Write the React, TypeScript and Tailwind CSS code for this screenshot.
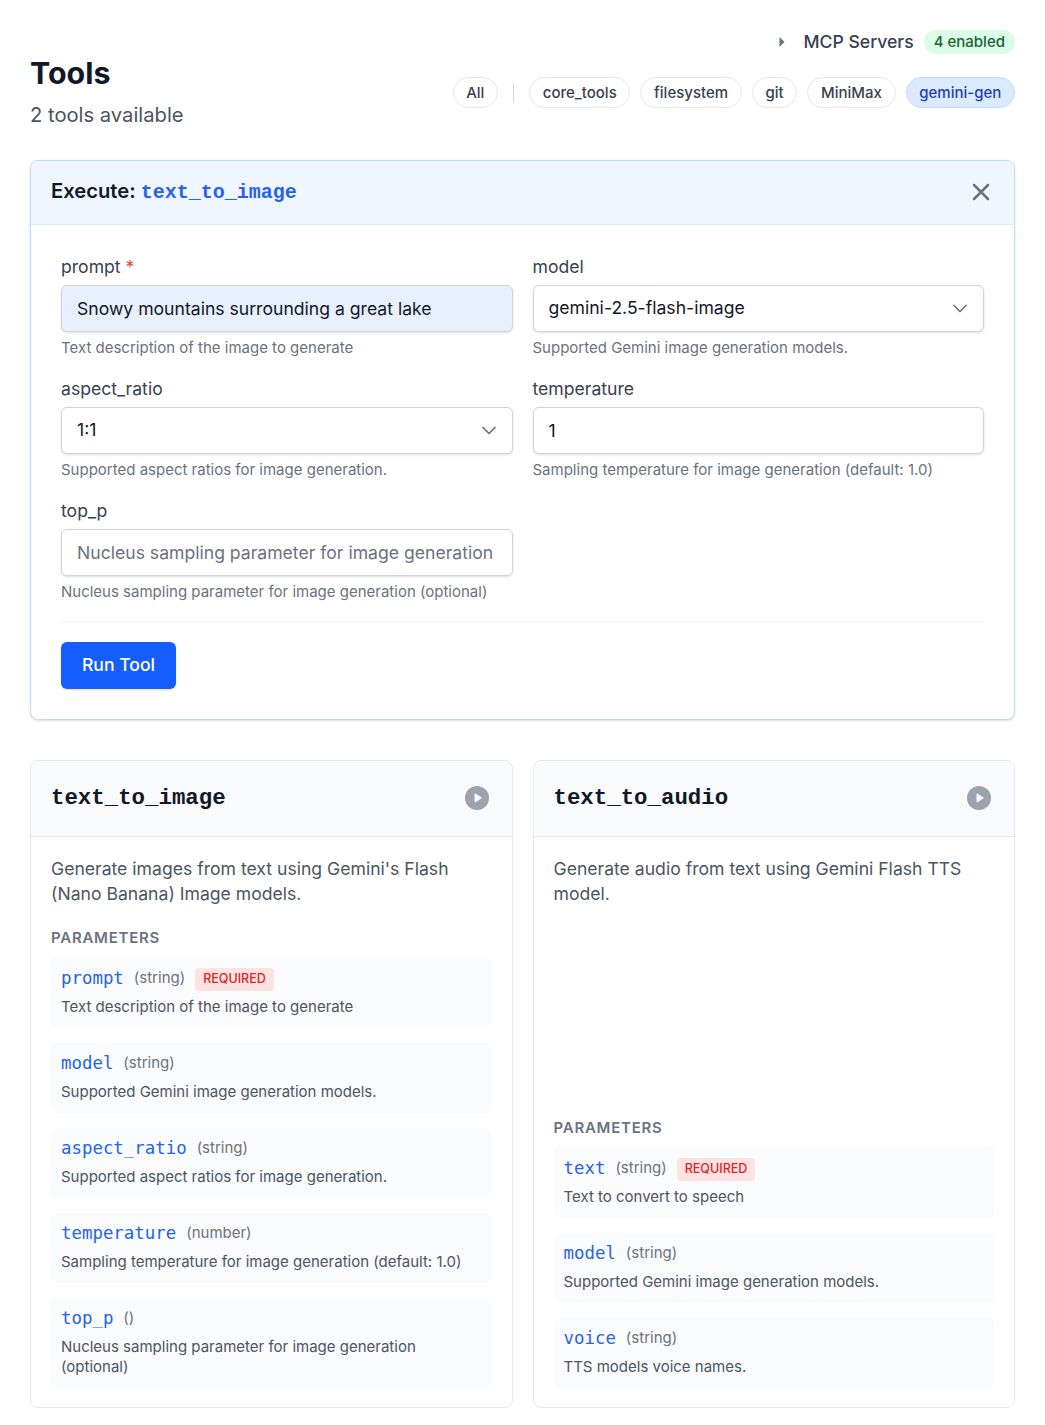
import React from 'react';

const FONT = "font-['Inter',sans-serif]";
const MONO = "font-['Liberation_Mono',monospace]";

interface Param {
  name: string;
  type: string;
  desc: string;
  required?: boolean;
}

const imageParams: Param[] = [
  { name: 'prompt', type: '(string)', desc: 'Text description of the image to generate', required: true },
  { name: 'model', type: '(string)', desc: 'Supported Gemini image generation models.' },
  { name: 'aspect_ratio', type: '(string)', desc: 'Supported aspect ratios for image generation.' },
  { name: 'temperature', type: '(number)', desc: 'Sampling temperature for image generation (default: 1.0)' },
  { name: 'top_p', type: '()', desc: 'Nucleus sampling parameter for image generation (optional)' },
];

const audioParams: Param[] = [
  { name: 'text', type: '(string)', desc: 'Text to convert to speech', required: true },
  { name: 'model', type: '(string)', desc: 'Supported Gemini image generation models.' },
  { name: 'voice', type: '(string)', desc: 'TTS models voice names.' },
];

const filters = ['core_tools', 'filesystem', 'git', 'MiniMax'];

const inputClass =
  'block w-full h-[47px] rounded-md border border-[#d1d5db] bg-white px-[15px] text-[17.6px] text-[#111827] shadow-sm outline-none appearance-none placeholder:text-[#6b7280]';

const chipClass =
  'h-[31px] rounded-full border border-[#e5e7eb] bg-white px-[12.7px] pt-[1px] text-[15px] font-medium text-[#374151]';

const Field: React.FC<{ label: string; help: string; required?: boolean; children: React.ReactNode }> = ({
  label,
  help,
  required,
  children,
}) => (
  <div className="flex flex-col">
    <label className="text-[17.6px] leading-[27px] mb-[5px] text-[#374151]">
      {label}
      {required && <span className="text-[#ef4444]"> *</span>}
    </label>
    {children}
    <p className="mt-[5px] text-[15px] leading-[21px] text-[#6b7280]">{help}</p>
  </div>
);

const SelectField: React.FC<{ value: string }> = ({ value }) => (
  <div className="relative">
    <select className={inputClass} defaultValue={value}>
      <option>{value}</option>
    </select>
    <svg
      className="absolute right-[12px] top-[11px] w-[24px] h-[24px] text-[#6b7280]"
      viewBox="0 0 24 24"
      fill="none"
      stroke="currentColor"
      strokeWidth="1.7"
      strokeLinecap="round"
      strokeLinejoin="round"
    >
      <path d="M6 9.5l6 6 6-6" />
    </svg>
  </div>
);

const ParamRow: React.FC<{ param: Param }> = ({ param }) => (
  <div className={`rounded-md bg-[#fafbfd] px-[10px] pb-[11px] ${param.required ? 'pt-[10px]' : 'pt-[9px]'}`}>
    <div className={`flex items-center gap-[10px] ${param.required ? 'h-[25px]' : 'h-[23px]'}`}>
      <code className="font-['DejaVu_Sans_Mono',monospace] text-[17.4px] text-[#2563eb]">{param.name}</code>
      <span className="text-[15px] text-[#6b7280]">{param.type}</span>
      {param.required && (
        <span className="rounded-[4px] bg-[#fee2e2] px-[8px] h-[23px] translate-y-px flex items-center text-[12.5px] font-medium text-[#dc2626]">
          REQUIRED
        </span>
      )}
    </div>
    <p className={`text-[15px] leading-[20px] text-[#4b5563] ${param.required ? 'mt-[6px]' : 'mt-[7px]'}`}>
      {param.desc}
    </p>
  </div>
);

const ToolCard: React.FC<{ name: string; desc: string; params: Param[] }> = ({ name, desc, params }) => (
  <div className="flex flex-col rounded-lg border border-[#e5e7eb] bg-white overflow-hidden">
    <div className="flex items-center justify-between h-[76px] px-[20px] bg-[#f9fafc] border-b border-[#e5e7eb]">
      <h3 className={`${MONO} text-[22.4px] font-bold text-[#111827]`}>{name}</h3>
      <svg className="w-6 h-6 text-[#9ca3af] mr-[3px] mb-[2px]" viewBox="0 0 24 24" fill="currentColor">
        <circle cx="12" cy="12" r="12" />
        <path d="M9.5 8.3c0-.6.6-1 1.1-.7l5.6 3.7c.5.3.5 1 0 1.3l-5.6 3.7c-.5.3-1.1-.1-1.1-.7z" fill="#f9fafc" />
      </svg>
    </div>
    <div className="flex flex-col flex-1 px-[20px] pt-[19px] pb-[19px]">
      <p className="flex-1 text-[17.6px] leading-[25px] text-[#4b5563] mb-[22px]">{desc}</p>
      <h4 className="text-[15px] leading-[20px] font-semibold tracking-[0.05em] text-[#6b7280] mb-[8px]">PARAMETERS</h4>
      <div className="flex flex-col gap-[15px]">
        {params.map((p) => (
          <ParamRow key={p.name} param={p} />
        ))}
      </div>
    </div>
  </div>
);

export default function App() {
  return (
    <div className={`${FONT} min-h-screen bg-white px-[30px] pt-[30px] pb-[17px]`}>
      <div className="flex items-start justify-between h-[100px] mb-[30px]">
        <div className="pt-[23px]">
          <h1 className="text-[30.4px] leading-[40px] font-bold text-[#111827]">Tools</h1>
          <p className="mt-[8px] text-[20.2px] leading-[28px] text-[#4b5563]">2 tools available</p>
        </div>
        <div className="flex flex-col items-end">
          <div className="flex items-center h-[24px]">
            <svg className="w-[8px] h-[12px] text-[#6b7280] mr-[18px]" viewBox="0 0 8 12" fill="currentColor">
              <path d="M1.5 1l5 5-5 5z" />
            </svg>
            <span className="text-[17.6px] font-medium text-[#374151]">MCP Servers</span>
            <span className="ml-[10px] rounded-full bg-[#dcfce7] px-[10px] pt-[1px] h-[24px] flex items-center text-[15px] font-medium text-[#166534]">
              4 enabled
            </span>
          </div>
          <div className="mt-[23px] flex items-center gap-[10px]">
            <button className={chipClass}>All</button>
            <span className="w-px h-[20px] mx-[5px] bg-[#d1d5db]" />
            {filters.map((f) => (
              <button key={f} className={chipClass}>
                {f}
              </button>
            ))}
            <button className="h-[31px] rounded-full border border-[#bfdbfe] bg-[#dbeafe] px-[12.7px] pt-[1px] text-[15px] font-medium text-[#1e40af]">
              gemini-gen
            </button>
          </div>
        </div>
      </div>

      <div className="rounded-lg border border-[#bfdbfe] bg-white shadow-sm overflow-hidden mb-[40px]">
        <div className="flex items-center justify-between h-[64px] px-[20px] pb-[2px] bg-[#eff6ff] border-b border-[#dbeafe]">
          <h2 className="text-[20.2px] font-semibold text-[#111827]">
            Execute: <code className={`${MONO} font-bold text-[20px] text-[#2563eb]`}>text_to_image</code>
          </h2>
          <svg
            className="w-[24px] h-[24px] text-[#6b7280] mr-[1px]"
            viewBox="0 0 24 24"
            fill="none"
            stroke="currentColor"
            strokeWidth="2.5"
            strokeLinecap="round"
          >
            <path d="M5 5l14 14M19 5L5 19" />
          </svg>
        </div>
        <div className="px-[30px] pt-[28px] pb-[30px]">
          <div className="grid grid-cols-2 gap-x-[20px] gap-y-[17px]">
            <Field label="prompt" help="Text description of the image to generate" required>
              <input className={`${inputClass} !bg-[#e8f0fe]`} readOnly value="Snowy mountains surrounding a great lake" />
            </Field>
            <Field label="model" help="Supported Gemini image generation models.">
              <SelectField value="gemini-2.5-flash-image" />
            </Field>
            <Field label="aspect_ratio" help="Supported aspect ratios for image generation.">
              <SelectField value="1:1" />
            </Field>
            <Field label="temperature" help="Sampling temperature for image generation (default: 1.0)">
              <input className={inputClass} readOnly value="1" />
            </Field>
            <Field label="top_p" help="Nucleus sampling parameter for image generation (optional)">
              <input className={inputClass} readOnly placeholder="Nucleus sampling parameter for image generation" />
            </Field>
          </div>
          <div className="mt-[19px] pt-[20px] border-t border-[#f3f4f6]">
            <button className="h-[47px] w-[115px] rounded-md bg-[#155dfc] text-[17.6px] font-medium text-white shadow-sm">
              Run Tool
            </button>
          </div>
        </div>
      </div>

      <div className="grid grid-cols-2 gap-[20px]">
        <ToolCard
          name="text_to_image"
          desc="Generate images from text using Gemini's Flash (Nano Banana) Image models."
          params={imageParams}
        />
        <ToolCard name="text_to_audio" desc="Generate audio from text using Gemini Flash TTS model." params={audioParams} />
      </div>
    </div>
  );
}
